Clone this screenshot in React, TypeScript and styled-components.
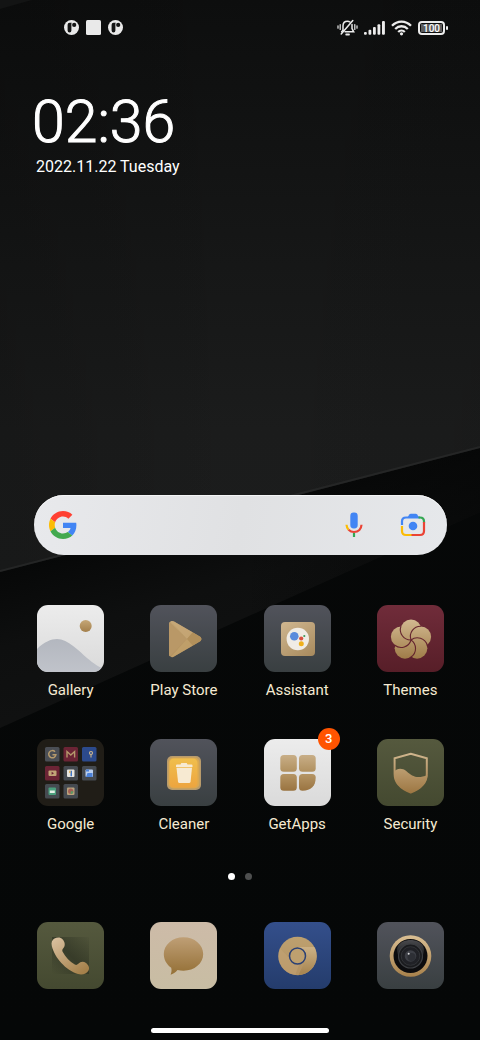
import React from 'react';
import styled, { createGlobalStyle } from 'styled-components';

const GlobalStyle = createGlobalStyle`
  * { box-sizing: border-box; }
  body {
    margin: 0;
    background: #050606;
    font-family: Roboto, 'Noto Sans', sans-serif;
  }
  button { font: inherit; color: inherit; border: 0; padding: 0; background: none; cursor: pointer; }
`;

const Screen = styled.main`
  position: relative;
  isolation: isolate;
  display: flex;
  flex-direction: column;
  min-height: 100vh;
  overflow: hidden;
  color: #fff;
`;

const WallpaperSvg = styled.svg`
  position: absolute;
  inset: 0;
  z-index: -1;
  width: 100%;
  height: 100%;
`;

const StatusBar = styled.header`
  display: flex;
  justify-content: space-between;
  align-items: center;
  height: 55px;
  padding: 0 32px 0 64px;
`;

const StatusGroup = styled.div<{ $gap: number }>`
  display: flex;
  align-items: center;
  gap: ${(p) => p.$gap}px;
  svg { display: block; }
`;

const Battery = styled.div`
  position: relative;
  display: flex;
  width: 27px;
  height: 14px;
  margin-right: 3px;
  padding: 1px;
  border: 2px solid #ececec;
  border-radius: 4px;
  &::after {
    content: '';
    position: absolute;
    top: 3px;
    right: -5px;
    width: 2px;
    height: 4px;
    border-radius: 1px;
    background: #ececec;
  }
`;

const BatteryLevel = styled.span`
  flex: 1;
  background: #5b5b5b;
  color: #fff;
  font-size: 10px;
  line-height: 9px;
  font-weight: 500;
  text-align: center;
`;

const ClockWidget = styled.section`
  flex: 1;
  padding: 33px 32px 40px;
`;

const Time = styled.time`
  display: block;
  font-size: 59px;
  line-height: 68px;
  font-weight: 300;
  -webkit-text-stroke: 1px #fff;
`;

const DateLine = styled.div`
  padding-left: 4px;
  font-size: 16px;
  line-height: 22px;
`;

const SearchBar = styled.form`
  display: flex;
  align-items: center;
  height: 60px;
  margin: 0 33px 50px 34px;
  padding: 0 20px 0 15px;
  border-radius: 30px;
  background: linear-gradient(100deg, #e8e9ec, #e0e1e3 50%, #e6e8eb);
  box-shadow: inset 0 1px 0 #f4f5f6;
`;

const SearchInput = styled.input`
  flex: 1;
  min-width: 0;
  height: 40px;
  margin: 0 12px;
  border: 0;
  outline: 0;
  background: transparent;
  color: #222;
  font: 16px Roboto, sans-serif;
`;

const SearchButton = styled.button<{ $space?: number }>`
  display: grid;
  place-items: center;
  width: 28px;
  height: 28px;
  margin-left: ${(p) => p.$space ?? 0}px;
  svg { display: block; }
`;

const AppGrid = styled.nav<{ $rowGap?: number }>`
  display: grid;
  grid-template-columns: repeat(4, 1fr);
  row-gap: ${(p) => p.$rowGap ?? 0}px;
  padding: 0 13px 0 14px;
`;

const AppButton = styled.button`
  display: flex;
  flex-direction: column;
  align-items: center;
  gap: 8px;
`;

const Tile = styled.span<{ $bg: string }>`
  position: relative;
  display: block;
  width: 67px;
  height: 67px;
  border-radius: 11px;
  background: ${(p) => p.$bg};
  svg { display: block; border-radius: 11px; }
`;

const Badge = styled.span`
  position: absolute;
  top: -11px;
  right: -9px;
  width: 22px;
  height: 22px;
  border-radius: 50%;
  background: #ff5400;
  color: #fff;
  font-size: 13px;
  line-height: 22px;
  font-weight: 500;
  text-align: center;
`;

const AppLabel = styled.span`
  color: #f5ead2;
  font-size: 15px;
  line-height: 20px;
`;

const PageDots = styled.div`
  display: flex;
  justify-content: center;
  gap: 10px;
  padding: 39px 0 42px;
`;

const Dot = styled.span<{ $active?: boolean }>`
  width: 7px;
  height: 7px;
  border-radius: 50%;
  background: ${(p) => (p.$active ? '#fff' : '#4e4f4f')};
`;

const HomeBar = styled.div`
  width: 37%;
  height: 5px;
  margin: 39px auto 7px;
  border-radius: 3px;
  background: #fff;
`;

const SLATE = 'linear-gradient(#51535b, #393f41)';
const SILVER = 'linear-gradient(#ececec, #dadada)';
const OLIVE = 'linear-gradient(#55593e, #444930)';
const WINE = 'linear-gradient(#702c3a, #571e28)';
const BLUE = 'linear-gradient(#344f8b, #243c6c)';

function Wallpaper() {
  return (
    <WallpaperSvg viewBox="0 0 480 1040" preserveAspectRatio="none" aria-hidden="true">
      <defs>
        <linearGradient id="wp-top" x1="0" y1="0" x2="0" y2="1">
          <stop offset="0" stopColor="#0d0e0e" />
          <stop offset="0.35" stopColor="#141515" />
          <stop offset="0.75" stopColor="#1b1c1c" />
          <stop offset="1" stopColor="#1c1d1d" />
        </linearGradient>
        <linearGradient id="wp-side" x1="0" y1="0" x2="1" y2="0">
          <stop offset="0" stopColor="#000" stopOpacity="0.15" />
          <stop offset="0.5" stopColor="#000" stopOpacity="0" />
          <stop offset="1" stopColor="#000" stopOpacity="0.06" />
        </linearGradient>
        <linearGradient id="wp-mid" gradientUnits="userSpaceOnUse" x1="200" y1="515" x2="240" y2="655">
          <stop offset="0" stopColor="#070808" />
          <stop offset="0.5" stopColor="#0e0f0f" />
          <stop offset="1" stopColor="#101111" />
        </linearGradient>
        <linearGradient id="wp-fade" x1="0" y1="0" x2="1" y2="0">
          <stop offset="0.5" stopColor="#060707" stopOpacity="0" />
          <stop offset="1" stopColor="#060707" stopOpacity="0.7" />
        </linearGradient>
        <linearGradient id="wp-low" x1="0" y1="0" x2="0" y2="1">
          <stop offset="0" stopColor="#070808" />
          <stop offset="1" stopColor="#050707" />
        </linearGradient>
      </defs>
      <rect width="480" height="1040" fill="url(#wp-low)" />
      <path d="M0 572 480 448V512L0 728Z" fill="url(#wp-mid)" />
      <path d="M0 572 480 448V512L0 728Z" fill="url(#wp-fade)" />
      <path d="M0 0H480V448L0 572Z" fill="url(#wp-top)" />
      <path d="M0 0H480V448L0 572Z" fill="url(#wp-side)" />
      <path d="M0 571 480 447" stroke="#2a2b2b" strokeWidth="2" opacity="0.7" />
      <path d="M0 0H32L0 9Z" fill="#131414" />
    </WallpaperSvg>
  );
}

function Art({ children }: { children: React.ReactNode }) {
  return (
    <svg width="67" height="67" viewBox="0 0 67 67" aria-hidden="true">
      {children}
    </svg>
  );
}

/* Linear gradient in tile coordinates, vertical unless x1/x2 are given. */
function Gold({ id, from = '#d0b48c', to = '#a07c49', y1 = 14, y2 = 54, x1 = 0, x2 = 0 }: {
  id: string; from?: string; to?: string; y1?: number; y2?: number; x1?: number; x2?: number;
}) {
  return (
    <linearGradient id={id} gradientUnits="userSpaceOnUse" x1={x1} y1={y1} x2={x2} y2={y2}>
      <stop offset="0" stopColor={from} />
      <stop offset="1" stopColor={to} />
    </linearGradient>
  );
}

function GalleryArt() {
  return (
    <Art>
      <defs>
        <Gold id="g-sun" from="#c5a777" to="#a37f4b" y1={15} y2={27} />
        <Gold id="g-hill" from="#b3b7bf" to="#c0c3ca" y1={34} y2={67} />
      </defs>
      <path d="M0 44C7 37 14 34 20 34C31 34 42 46 50 53C57 59 62 62 67 64V67H0Z" fill="url(#g-hill)" />
      <circle cx="48.700" cy="21" r="6" fill="url(#g-sun)" />
    </Art>
  );
}

function PlayArt() {
  return (
    <Art>
      <defs>
        <Gold id="p-a" from="#c6a878" to="#a98753" y1={16} y2={52} x1={20} x2={50} />
        <clipPath id="p-clip">
          <path d="M19 19.500C19 16.500 21.500 15.200 24 16.600L49.500 31.200C52 32.700 52 35.300 49.500 36.800L24 51.600C21.500 53 19 51.600 19 48.800Z" />
        </clipPath>
      </defs>
      <g clipPath="url(#p-clip)">
        <rect x="18" y="14" width="36" height="40" fill="url(#p-a)" />
        <path d="M19 16 36.500 34 19 52Z" fill="#b99867" />
        <path d="M19 14 37 34 43 27 22 14Z" fill="#c9aa79" opacity="0.7" />
        <path d="M37 34 43 27 54 34 43 41Z" fill="#b2905b" />
        <path d="M19 54 37 34 43 41 24 54Z" fill="#c2a16c" opacity="0.8" />
      </g>
    </Art>
  );
}

function AssistantArt() {
  return (
    <Art>
      <defs><Gold id="a-sq" from="#cdb48d" to="#a98c60" y1={17} y2={51} x1={22} x2={46} /></defs>
      <rect x="17" y="17" width="34" height="34" rx="4" fill="url(#a-sq)" />
      <circle cx="33.800" cy="34" r="11.200" fill="#f0ece5" />
      <circle cx="30.300" cy="31.200" r="4.300" fill="#5a8bdc" />
      <circle cx="37.200" cy="33.500" r="2.100" fill="#d95040" />
      <circle cx="40.300" cy="31" r="1.100" fill="#3d9a5b" />
      <circle cx="37.300" cy="38.700" r="2.500" fill="#efb01c" />
    </Art>
  );
}

function ThemesArt() {
  const r = 10.3;
  const cx = 34;
  const cy = 35;
  const at = (deg: number, d: number) => {
    const a = (deg * Math.PI) / 180;
    return [cx + d * Math.cos(a), cy + d * Math.sin(a)];
  };
  const tip = 2 * r * Math.cos(Math.PI / 5);
  const angles = [0, 1, 2, 3, 4].map((i) => -90 + i * 72);
  return (
    <Art>
      <defs><Gold id="t-petal" from="#d3ba92" to="#9f7c48" y1={14} y2={54} /></defs>
      {angles.map((deg) => {
        const [x, y] = at(deg, r);
        return <circle key={deg} cx={x} cy={y} r={r} fill="url(#t-petal)" />;
      })}
      {angles.map((deg) => {
        const [x, y] = at(deg - 36, tip + 0.4);
        return <path key={deg} d={`M${cx} ${cy}A${r} ${r} 0 0 1 ${x} ${y}`} fill="none" stroke="#65252f" strokeWidth="1.100" />;
      })}
    </Art>
  );
}

function FolderArt() {
  const cells = [
    [8, 8, '#4a4e55'], [26.5, 8, '#6b2435'], [45, 8, '#2c4a8c'],
    [8, 27, '#6b2435'], [26.5, 27, '#454a50'], [45, 27, '#454a50'],
    [8, 45, '#454a50'], [26.5, 45, '#454a50'],
  ] as const;
  return (
    <Art>
      {cells.map(([x, y, fill]) => <rect key={`${x}-${y}`} x={x} y={y} width="14.500" height="14.500" rx="1.500" fill={fill} />)}
      <path d="M18 12.800A3.600 3.600 0 1 0 18.900 15.700H15.500" fill="none" stroke="#b59a6c" strokeWidth="1.500" />
      <path d="M30 18.500V12.500L33.800 16L37.600 12.500V18.500" fill="none" stroke="#b59a6c" strokeWidth="1.400" />
      <circle cx="54" cy="14" r="1.500" fill="none" stroke="#d0b98e" strokeWidth="1.100" />
      <path d="M54 15.500V18.500" stroke="#d0b98e" strokeWidth="1.100" />
      <rect x="11.500" y="31.500" width="8" height="5.500" rx="1" fill="#c0a477" />
      <path d="M14.600 32.800V35.700L17 34.200Z" fill="#6b2435" />
      <rect x="30" y="30.500" width="7.500" height="7.500" rx="1" fill="#e7e5df" />
      <path d="M33.500 31.800H35V37.200H33.500Z" fill="#3e75c4" />
      <path d="M32.300 31.800H33.500V34H32.300Z" fill="#e0a53b" />
      <rect x="48.500" y="30.500" width="7.500" height="7.500" rx="1" fill="#bcd0ef" />
      <path d="M50.500 34H55.500V38H49ZM49 30.500H52V32.500H49Z" fill="#4c82d9" />
      <rect x="11.500" y="48.500" width="7.500" height="7.500" rx="1" fill="#4b9f7d" />
      <path d="M12.800 51.500H17.800V54H12.800Z" fill="#e6efe8" />
      <rect x="30" y="48.500" width="7.500" height="7.500" rx="1" fill="#b9a27c" />
      <circle cx="33.700" cy="52.200" r="2.600" fill="#a45f55" />
      <path d="M33.700 52.200V55A2.600 2.600 0 0 0 36.300 52.200Z" fill="#5d9a65" />
    </Art>
  );
}

function CleanerArt() {
  return (
    <Art>
      <defs><Gold id="c-sq" from="#f0bf4d" to="#eda43f" y1={19} y2={49} /></defs>
      <rect x="17" y="17" width="34" height="34" rx="5" fill="#b99b6b" />
      <rect x="18.500" y="18.500" width="31" height="31" rx="5" fill="#d9a851" />
      <rect x="19.500" y="19.500" width="28" height="29" rx="4.500" fill="url(#c-sq)" />
      <path d="M26 26.500Q26 25.500 27 25.500H30.500L31.300 24H36.700L37.500 25.500H41.500Q42.500 25.500 42.500 26.500V28H26Z" fill="#f7ead2" />
      <path d="M26.500 28.800H42L40.600 42.500Q40.400 44 39 44H29.500Q28.200 44 28 42.500Z" fill="#f7ead2" />
    </Art>
  );
}

function GetAppsArt() {
  return (
    <Art>
      <defs>
        <Gold id="ga-a" from="#c8ae87" to="#b0905f" y1={16} y2={33} />
        <Gold id="ga-b" from="#b59565" to="#997340" y1={35} y2={52} />
      </defs>
      <rect x="16.300" y="16" width="16.500" height="16.700" rx="3.500" fill="url(#ga-a)" />
      <rect x="35" y="16" width="16.700" height="16.700" rx="3.500" fill="url(#ga-a)" />
      <rect x="16.300" y="35" width="16.500" height="16.700" rx="3.500" fill="url(#ga-b)" />
      <path d="M38.500 35H48.200Q51.700 35 51.700 38.500C51.700 47 47 51.700 38.500 51.700Q35 51.700 35 48.200V38.500Q35 35 38.500 35Z" fill="url(#ga-b)" />
    </Art>
  );
}

function SecurityArt() {
  return (
    <Art>
      <defs><Gold id="s-gold" from="#d0b68e" to="#9d7743" y1={14} y2={54} /></defs>
      <path d="M33.700 14.700 49.800 19.200V35C49.800 44 43 50 33.700 53.500C24.500 50 17.600 44 17.600 35V19.200Z" fill="none" stroke="url(#s-gold)" strokeWidth="2" />
      <path d="M17 33C20 29 25 28.700 29.500 32.200C35 37 40 40.500 50.500 36C50 44.500 43 50.500 33.700 54C24.500 50.500 17 44.500 17 35Z" fill="url(#s-gold)" />
    </Art>
  );
}

function PhoneArt() {
  return (
    <Art>
      <defs>
        <Gold id="ph-gold" from="#dcc3a3" to="#a5814b" y1={15} y2={53} x1={15} x2={42} />
        <linearGradient id="ph-shade" x1="1" y1="0" x2="0" y2="1">
          <stop offset="0" stopColor="#2a2e20" stopOpacity="0.05" />
          <stop offset="0.5" stopColor="#2a2e20" stopOpacity="0.6" />
          <stop offset="1" stopColor="#2a2e20" stopOpacity="0" />
        </linearGradient>
      </defs>
      <rect x="15" y="15" width="37" height="37" fill="url(#ph-shade)" />
      <path d="M17.500 16.500C20 15 23.500 14.800 25.500 17.200C28 20 28.600 23.500 26.300 26.300C25.300 27.500 25 28.500 25.600 29.700C28.500 35 32.500 39.500 37.800 42.600C39.200 43.400 40.300 42.900 41.300 41.800C43.600 39.300 46.500 39 49 41C51.500 43 53 46 51.500 48.500C49.500 51.800 45.500 53.100 41 52C29 48.500 17.500 35.500 14.800 24C14 20.500 15 18 17.500 16.500Z" fill="url(#ph-gold)" />
    </Art>
  );
}

function MessageArt() {
  return (
    <Art>
      <defs><Gold id="m-gold" from="#bf9f76" to="#97733a" y1={15} y2={50} /></defs>
      <path d="M33.500 15.200C44.500 15.200 53.200 22.700 53.200 32C53.200 41.400 44.500 48.700 33.500 48.700C31.500 48.700 29.500 48.500 27.500 48.100C25.500 50.500 23 52 20.600 52.700C21.500 50.500 21.900 47.800 21.200 45.700C16.500 42.400 13.800 37.500 13.800 32C13.800 22.700 22.500 15.200 33.500 15.200Z" fill="url(#m-gold)" />
    </Art>
  );
}

function ChromeArt() {
  return (
    <Art>
      <defs>
        <Gold id="ch-gold" from="#bda06f" to="#b39263" y1={15} y2={53} />
        <Gold id="ch-side" from="#cbb084" to="#a98753" y1={26} y2={50} />
        <clipPath id="ch-clip"><circle cx="33.500" cy="34" r="19.200" /></clipPath>
      </defs>
      <g clipPath="url(#ch-clip)">
        <rect x="14" y="14" width="40" height="40" fill="url(#ch-gold)" />
        <path d="M33.500 25H54V54H34L41 39Z" fill="url(#ch-side)" />
        <path d="M14 24 27 38 35 43 31 54 14 48Z" fill="#c4a475" opacity="0.5" />
      </g>
      <circle cx="33.500" cy="34" r="8" fill="#bea06f" stroke="#2b4175" strokeWidth="1.500" />
    </Art>
  );
}

function CameraArt() {
  return (
    <Art>
      <defs>
        <Gold id="cam-gold" from="#d8bd92" to="#a9834d" y1={14} y2={54} />
        <Gold id="cam-glass" from="#5b5c60" to="#1b1c1e" y1={17} y2={36} />
      </defs>
      <circle cx="33.500" cy="34" r="20.800" fill="url(#cam-gold)" />
      <circle cx="33.500" cy="34" r="17" fill="#0c0c0e" />
      <path d="M21 24C25.500 16 41.500 16 46 24C48 28 46 33 46 33H21C21 33 19 28 21 24Z" fill="url(#cam-glass)" opacity="0.8" />
      <circle cx="33.500" cy="34" r="12" fill="#1a1b1e" stroke="#3c3e42" strokeWidth="1.200" />
      <circle cx="33.500" cy="34" r="9.300" fill="#202126" stroke="#313337" strokeWidth="1" />
      <circle cx="33.500" cy="34" r="5.800" fill="#3d3f46" />
      <circle cx="34.500" cy="35" r="4" fill="#2d2f35" />
      <circle cx="31.700" cy="31.700" r="1" fill="#d9dadd" />
    </Art>
  );
}

function NotificationIcon() {
  return (
    <svg width="15" height="15" viewBox="0 0 15 15" role="img" aria-label="Notification">
      <circle cx="7.500" cy="7.500" r="7.500" fill="#e9e9e9" />
      <path d="M7.800 2.800H5.600Q3.600 2.800 3.600 4.700V10.500A1.900 1.900 0 0 0 7.400 10.500V4.200Q7.400 3.200 7.800 2.800Z" fill="#141515" />
      <circle cx="10.200" cy="4.900" r="2.100" fill="#141515" />
    </svg>
  );
}

function MutedIcon() {
  return (
    <svg width="21" height="17" viewBox="0 0 21 17" fill="none" stroke="#ececec" strokeWidth="1.500" strokeLinecap="round" role="img" aria-label="Ringer off">
      <path d="M6 11.500V6.800C6 4 7.800 2.200 10.500 2.200C11.500 2.200 12.300 2.500 13 3" />
      <path d="M15 5.500V9.500L16.700 12.800H8" />
      <path d="M5.800 11.500 4.600 12.800" />
      <path d="M15.800 1.500 4.200 15" />
      <path d="M9.200 15.500H12" strokeWidth="1.800" />
      <path d="M3.200 5.500V10.500M1 6.800V9.200M17.800 5.500V10.500M20 6.800V9.200" strokeWidth="1.200" />
    </svg>
  );
}

function SignalIcon() {
  return (
    <svg width="21" height="14" viewBox="0 0 21 14" fill="#ececec" role="img" aria-label="Mobile signal">
      <rect x="0" y="11" width="2.800" height="2.700" rx="1" />
      <rect x="4.500" y="8.800" width="2.800" height="4.900" rx="1" />
      <rect x="9" y="6" width="2.800" height="7.700" rx="1" />
      <rect x="13.500" y="3.200" width="2.800" height="10.500" rx="1" />
      <rect x="18" y="0" width="2.900" height="13.700" rx="1" />
    </svg>
  );
}

function WifiIcon() {
  return (
    <svg width="21" height="16" viewBox="0 0 21 16" fill="none" stroke="#ececec" strokeWidth="2.300" role="img" aria-label="Wi-Fi">
      <path d="M1 5.800C6.300 0.200 14.700 0.200 20 5.800" />
      <path d="M4.200 9C7.800 5.300 13.200 5.300 16.800 9" />
      <path d="M7.200 12C9 10.200 12 10.200 13.800 12" />
      <circle cx="10.500" cy="13.800" r="1.600" fill="#ececec" stroke="none" />
    </svg>
  );
}

function GoogleLogo() {
  return (
    <svg width="28" height="28" viewBox="0 0 48 48" aria-hidden="true">
      <path fill="#FF4032" d="M24 9.500c3.540 0 6.710 1.220 9.210 3.600l6.850-6.850C35.900 2.380 30.470 0 24 0 14.620 0 6.510 5.380 2.560 13.220l7.980 6.190C12.430 13.720 17.740 9.500 24 9.500z" />
      <path fill="#4285F4" d="M46.980 24.550c0-1.570-.15-3.090-.38-4.550H24v9.020h12.940c-.58 2.960-2.260 5.480-4.780 7.180l7.730 6c4.510-4.180 7.090-10.360 7.090-17.650z" />
      <path fill="#FBBC05" d="M10.530 28.590c-.48-1.450-.76-2.990-.76-4.590s.27-3.140.76-4.590l-7.980-6.190C.92 16.460 0 20.120 0 24c0 3.880.92 7.540 2.560 10.780l7.970-6.190z" />
      <path fill="#43A94F" d="M24 48c6.480 0 11.930-2.130 15.890-5.810l-7.730-6c-2.150 1.450-4.920 2.300-8.160 2.300-6.260 0-11.570-4.220-13.470-9.910l-7.980 6.190C6.510 42.620 14.620 48 24 48z" />
    </svg>
  );
}

function MicIcon() {
  return (
    <svg width="18" height="26" viewBox="0 0 18 26" fill="none" strokeWidth="2.200" aria-hidden="true">
      <rect x="5.300" y="0.500" width="7.400" height="16" rx="3.400" fill="#4285f4" />
      <path d="M1.500 12.800Q1.700 15.800 3.600 17.800" stroke="#fbbc05" />
      <path d="M3.600 17.800Q5.800 20 9 20C13.500 20 16.300 17 16.500 12.800" stroke="#ea4335" />
      <path d="M9 21V25" stroke="#34a853" />
    </svg>
  );
}

function LensIcon() {
  return (
    <svg width="26" height="24" viewBox="0 0 26 24" fill="none" strokeWidth="2.200" aria-hidden="true">
      <path d="M2 12V8.500Q2 4.500 6 4.500H20" stroke="#4285f4" />
      <path d="M7.500 4.500 9.300 1.500Q9.800 0.800 10.800 0.800H15.700Q16.700 0.800 17.200 1.500L19 4.500Z" fill="#4285f4" />
      <path d="M18.500 4.500H20Q24 4.500 24 8.500V10" stroke="#34a853" />
      <path d="M24 9V18Q24 22 20 22H11" stroke="#ea4335" />
      <path d="M2 13V18Q2 22 6 22H11.500" stroke="#fbbc05" />
      <circle cx="13" cy="13" r="4.300" fill="#4285f4" />
    </svg>
  );
}

interface App {
  name: string;
  bg: string;
  art: React.ReactNode;
  badge?: number;
}

const apps: App[] = [
  { name: 'Gallery', bg: SILVER, art: <GalleryArt /> },
  { name: 'Play Store', bg: SLATE, art: <PlayArt /> },
  { name: 'Assistant', bg: SLATE, art: <AssistantArt /> },
  { name: 'Themes', bg: WINE, art: <ThemesArt /> },
  { name: 'Google', bg: '#201d17', art: <FolderArt /> },
  { name: 'Cleaner', bg: SLATE, art: <CleanerArt /> },
  { name: 'GetApps', bg: SILVER, art: <GetAppsArt />, badge: 3 },
  { name: 'Security', bg: OLIVE, art: <SecurityArt /> },
];

const dock: App[] = [
  { name: 'Phone', bg: OLIVE, art: <PhoneArt /> },
  { name: 'Messages', bg: 'linear-gradient(#cdbba8, #c8bda3)', art: <MessageArt /> },
  { name: 'Chrome', bg: BLUE, art: <ChromeArt /> },
  { name: 'Camera', bg: SLATE, art: <CameraArt /> },
];

export default function HomeScreen() {
  return (
    <>
      <GlobalStyle />
      <Screen>
        <Wallpaper />
        <StatusBar>
          <StatusGroup $gap={7}>
            <NotificationIcon />
            <svg width="15" height="15" viewBox="0 0 15 15" aria-hidden="true">
              <rect width="15" height="15" rx="1.500" fill="#e9e9e9" />
            </svg>
            <NotificationIcon />
          </StatusGroup>
          <StatusGroup $gap={6}>
            <MutedIcon />
            <SignalIcon />
            <WifiIcon />
            <Battery><BatteryLevel>100</BatteryLevel></Battery>
          </StatusGroup>
        </StatusBar>

        <ClockWidget>
          <Time dateTime="2022-11-22T02:36">02:36</Time>
          <DateLine>2022.11.22 Tuesday</DateLine>
        </ClockWidget>

        <SearchBar role="search" onSubmit={(e) => e.preventDefault()}>
          <SearchButton type="submit" aria-label="Google Search"><GoogleLogo /></SearchButton>
          <SearchInput type="search" aria-label="Search" />
          <SearchButton type="button" aria-label="Voice search"><MicIcon /></SearchButton>
          <SearchButton type="button" aria-label="Search with camera" $space={31}><LensIcon /></SearchButton>
        </SearchBar>

        <AppGrid $rowGap={39} aria-label="Apps">
          {apps.map((app) => (
            <AppButton key={app.name} type="button">
              <Tile $bg={app.bg}>
                {app.art}
                {app.badge && <Badge>{app.badge}</Badge>}
              </Tile>
              <AppLabel>{app.name}</AppLabel>
            </AppButton>
          ))}
        </AppGrid>

        <PageDots>
          <Dot $active />
          <Dot />
        </PageDots>

        <AppGrid aria-label="Dock">
          {dock.map((app) => (
            <AppButton key={app.name} type="button" aria-label={app.name}>
              <Tile $bg={app.bg}>{app.art}</Tile>
            </AppButton>
          ))}
        </AppGrid>

        <HomeBar />
      </Screen>
    </>
  );
}
